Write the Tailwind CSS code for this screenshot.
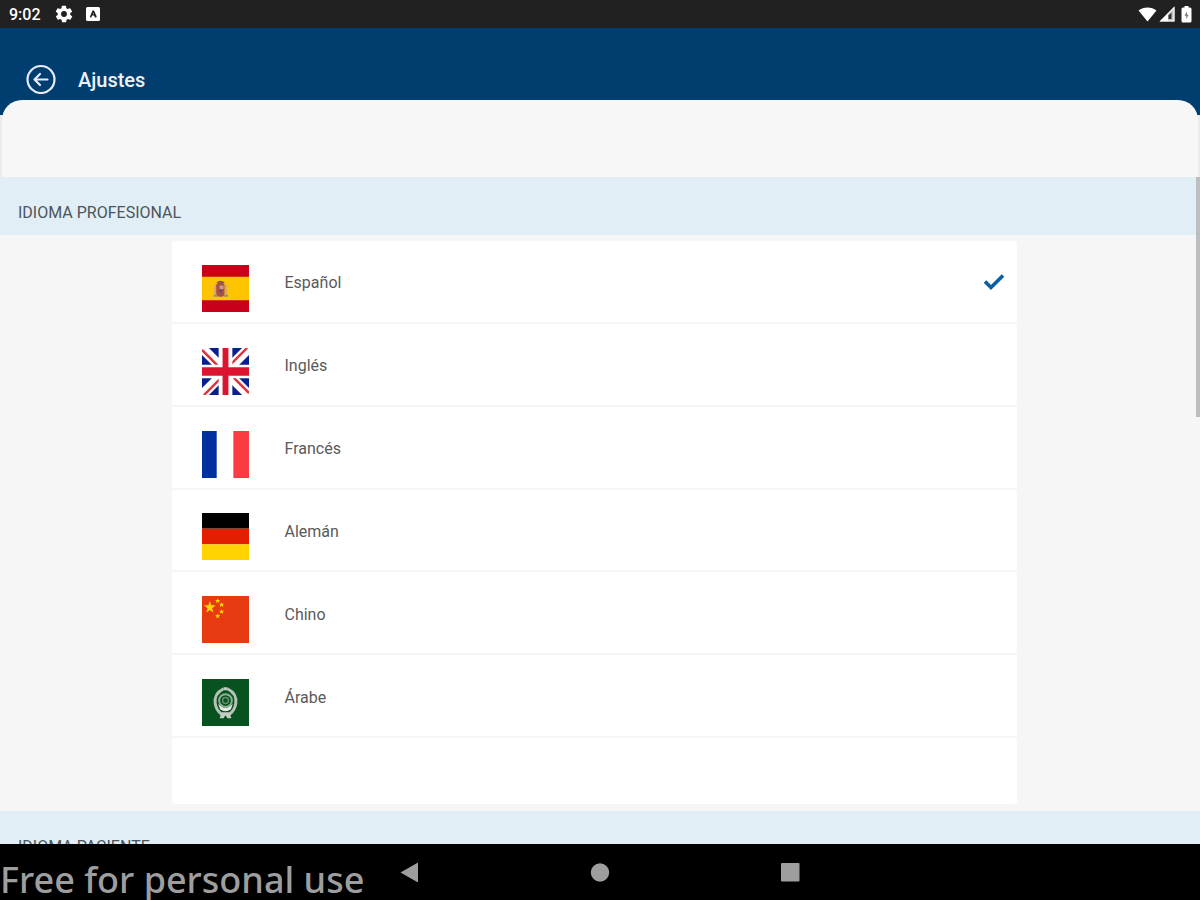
<!DOCTYPE html>
<html lang="es">
<head>
    <meta charset="UTF-8">
    <meta name="viewport" content="width=device-width, initial-scale=1.0">
    <title>Ajustes</title>
    <script src="https://cdn.jsdelivr.net/npm/@tailwindcss/browser@4"></script>
</head>
<body class="h-screen flex flex-col overflow-hidden bg-[#f6f6f6] font-[Roboto,sans-serif] text-base text-[#5a5a5a]">

    <!-- Status bar -->
    <div class="h-7 shrink-0 flex items-center justify-between bg-[#212121] text-white pl-[9px] pr-2">
        <div class="flex items-center gap-[13px]">
            <span class="text-base font-medium leading-7 pt-[2px]">9:02</span>
            <svg class="w-5 h-5" viewBox="0 0 24 24" fill="currentColor"><path d="M19.4 13c0-.3.1-.6.1-1s0-.7-.1-1l2.1-1.600c.2-.2.3-.4.1-.7l-2-3.400c-.1-.2-.4-.3-.6-.2l-2.500 1c-.5-.4-1.100-.7-1.700-1l-.4-2.600c0-.3-.2-.5-.5-.5h-4c-.2 0-.4.2-.5.4l-.4 2.700c-.6.2-1.100.6-1.700 1l-2.500-1c-.2-.1-.5 0-.6.2l-2 3.400c-.1.3 0 .5.1.7L4.600 11c0 .3-.1.700-.1 1s0 .7.1 1l-2.100 1.600c-.2.2-.3.400-.1.700l2 3.400c.1.200.4.300.6.200l2.500-1c.5.4 1.100.7 1.700 1l.4 2.600c0 .3.200.5.5.5h4c.2 0 .5-.2.5-.4l.4-2.700c.6-.2 1.200-.6 1.700-1l2.500 1c.2.1.5 0 .6-.2l2-3.400c.1-.2.1-.5-.1-.7L19.400 13zM12 15.500a3.500 3.500 0 1 1 0-7 3.500 3.500 0 0 1 0 7z"/></svg>
            <svg class="w-[14px] h-[14px] -ml-[1px]" viewBox="0 0 14 14"><rect width="14" height="14" rx="1.500" fill="#fff"/><path d="M4 10.500V9.500L6.500 3.500h1.500L10.500 9v1.500H9L8 8.500H6.200L5.200 10.500z" fill="#212121"/><path d="M6.800 7.300h1L7.400 5.800z" fill="#fff"/></svg>
        </div>
        <div class="flex items-center gap-[2px]">
            <svg class="w-[19px] h-[15px]" viewBox="0 0 19 15" fill="currentColor"><path d="M.5 3.500C5.500-.5 13.500-.5 18.500 3.500L9.500 14.500z"/></svg>
            <svg class="w-4 h-4" viewBox="0 0 16 16"><path d="M.5 15.500L15.500.5v15z" fill="#fff" fill-opacity=".75"/><path d="M.5 15.500L15.500.5v15z M9 14.500h5.500V3L9 8.500z" fill="#fff" fill-rule="evenodd"/><path d="M9.500 13V9.500l3-3V13z" fill="#333"/></svg>
            <svg class="w-[11px] h-[17px] ml-1" viewBox="0 0 11 17"><path d="M3.500 0h4v1.500H9a1.500 1.500 0 0 1 1.500 1.500v12A1.500 1.500 0 0 1 9 16.500H2A1.500 1.500 0 0 1 .5 15V3A1.500 1.500 0 0 1 2 1.500h1.500z" fill="#fff"/><path d="M6 5.500L3.500 9.800H5.200V13L7.700 8.700H6z" fill="#777"/></svg>
        </div>
    </div>

    <!-- App bar -->
    <header class="h-[87px] shrink-0 flex items-start bg-[#003e70] text-white pt-9 pl-[26px]">
        <button type="button" aria-label="Volver" class="w-[30px] h-[30px]">
            <svg class="w-[30px] h-[30px]" viewBox="0 0 30 30" fill="none" stroke="#e9ecff" stroke-width="2.200" stroke-linecap="round" stroke-linejoin="round"><circle cx="15" cy="15.500" r="13.500"/><path d="M21.500 15.500H8.500M14 10L8.500 15.500l5.500 5.500"/></svg>
        </button>
        <h1 class="ml-[22px] text-xl leading-8 font-medium text-[#eef1f8]">Ajustes</h1>
    </header>

    <div class="shrink-0 -mt-[15px] bg-linear-to-b from-transparent from-[15px] to-[#ebebeb] to-[15px] px-[2px]">
        <div class="h-[77px] rounded-t-[20px] bg-[#f7f7f7]"></div>
    </div>

    <main class="relative flex-1 min-h-0 overflow-hidden">
        <h2 class="h-[58px] pl-[18px] pt-3 leading-[47px] bg-[#e1eef6] text-[#4b555b]">IDIOMA PROFESIONAL</h2>

        <div class="w-[845px] max-w-full mx-auto mt-[6px] mb-[7px] pb-[66px] -translate-x-[6px] rounded-[3px] bg-white">
            <div class="h-[497px] grid grid-rows-6" role="radiogroup" aria-label="Idioma profesional">
                <label class="relative flex items-center border-b-2 border-[#f6f6f6] pl-[30px] pr-3">
                    <input type="radio" name="idioma" value="es" class="peer sr-only" checked>
                    <svg class="w-[47px] h-[47px] mt-[14px]" viewBox="0 0 48 48">
                        <rect width="48" height="48" fill="#c8001b"/><rect y="12" width="48" height="24" fill="#ffc400"/>
                        <path d="M12.500 20h2v11h-2zM23.500 20h2v11h-2z" fill="#d3a770"/>
                        <path d="M14.500 20l4.500-3 4 3v9q0 3.500-4 3.500t-4.500-3.500z" fill="#a8504a"/><path d="M15.500 18.500q3.500-3 7 0" stroke="#8a5a3f" stroke-width="2" fill="none"/>
                        <path d="M18 21h4v3.500h-4z" fill="#cf9a90"/><circle cx="19" cy="26.500" r="1.600" fill="#5a5078"/><path d="M12 31.500h4M22.500 31.500h4" stroke="#a08a78" stroke-width="2"/>
                    </svg>
                    <span class="ml-9 pt-1 flex-1">Español</span>
                    <svg class="w-[22px] h-[18px] mt-[2px] invisible peer-checked:visible" viewBox="0 0 22 18" fill="none" stroke="#0c5fa5" stroke-width="3.600"><path d="M2 8.500L8 14.500L20 2.500"/></svg>
                </label>
                <label class="relative flex items-center border-b-2 border-[#f6f6f6] pl-[30px] pr-3">
                    <input type="radio" name="idioma" value="en" class="peer sr-only">
                    <svg class="w-[47px] h-[47px] mt-[14px]" viewBox="0 0 48 48">
                        <rect width="48" height="48" fill="#0a1f8f"/>
                        <path d="M0 0l48 48M48 0L0 48" stroke="#fff" stroke-width="10"/>
                        <path d="M0 2L20 22M46 0L26 20M48 46L28 26M2 48L22 28" stroke="#e0323c" stroke-width="2.500"/>
                        <path d="M24 0v48M0 24h48" stroke="#fff" stroke-width="14"/>
                        <path d="M24 0v48" stroke="#dc1430" stroke-width="6"/><path d="M0 24h48" stroke="#dc1430" stroke-width="8.500"/>
                    </svg>
                    <span class="ml-9 pt-1 flex-1">Inglés</span>
                    <svg class="w-[22px] h-[18px] mt-[2px] invisible peer-checked:visible" viewBox="0 0 22 18" fill="none" stroke="#0c5fa5" stroke-width="3.600"><path d="M2 8.500L8 14.500L20 2.500"/></svg>
                </label>
                <label class="relative flex items-center border-b-2 border-[#f6f6f6] pl-[30px] pr-3">
                    <input type="radio" name="idioma" value="fr" class="peer sr-only">
                    <svg class="w-[47px] h-[47px] mt-[14px]" viewBox="0 0 48 48">
                        <rect width="48" height="48" fill="#fff"/><rect width="15" height="48" fill="#0030a0"/><rect x="32" width="16" height="48" fill="#f93c44"/>
                    </svg>
                    <span class="ml-9 pt-1 flex-1">Francés</span>
                    <svg class="w-[22px] h-[18px] mt-[2px] invisible peer-checked:visible" viewBox="0 0 22 18" fill="none" stroke="#0c5fa5" stroke-width="3.600"><path d="M2 8.500L8 14.500L20 2.500"/></svg>
                </label>
                <label class="relative flex items-center border-b-2 border-[#f6f6f6] pl-[30px] pr-3">
                    <input type="radio" name="idioma" value="de" class="peer sr-only">
                    <svg class="w-[47px] h-[47px] mt-[14px]" viewBox="0 0 48 48">
                        <rect width="48" height="16" fill="#000"/><rect y="16" width="48" height="16" fill="#e41f00"/><rect y="32" width="48" height="16" fill="#ffd200"/>
                    </svg>
                    <span class="ml-9 pt-1 flex-1">Alemán</span>
                    <svg class="w-[22px] h-[18px] mt-[2px] invisible peer-checked:visible" viewBox="0 0 22 18" fill="none" stroke="#0c5fa5" stroke-width="3.600"><path d="M2 8.500L8 14.500L20 2.500"/></svg>
                </label>
                <label class="relative flex items-center border-b-2 border-[#f6f6f6] pl-[30px] pr-3">
                    <input type="radio" name="idioma" value="zh" class="peer sr-only">
                    <svg class="w-[47px] h-[47px] mt-[14px]" viewBox="0 0 48 48">
                        <rect width="48" height="48" fill="#e73a10"/>
                        <g fill="#ffd800">
                            <path d="M8 5l1.500 4.500H14l-3.700 2.900L11.800 17 8 14.200 4.200 17l1.500-4.600L2 9.500h4.500z"/>
                            <path id="star" d="M16 2.500l.7 1.500h1.800l-1.300 1.300.5 1.900-1.700-1-1.700 1 .5-1.900L13.500 4h1.800z"/>
                            <use href="#star" x="4" y="4"/><use href="#star" x="4" y="11"/><use href="#star" y="15.500"/>
                        </g>
                    </svg>
                    <span class="ml-9 pt-1 flex-1">Chino</span>
                    <svg class="w-[22px] h-[18px] mt-[2px] invisible peer-checked:visible" viewBox="0 0 22 18" fill="none" stroke="#0c5fa5" stroke-width="3.600"><path d="M2 8.500L8 14.500L20 2.500"/></svg>
                </label>
                <label class="relative flex items-center border-b-2 border-[#f6f6f6] pl-[30px] pr-3">
                    <input type="radio" name="idioma" value="ar" class="peer sr-only">
                    <svg class="w-[47px] h-[47px] mt-[14px]" viewBox="0 0 48 48" fill="none">
                        <rect width="48" height="48" fill="#07521f"/>
                        <path d="M22 10q-10 5-8.500 15 1 7 6.500 11M26 10q10 5 8.500 15-1 7-6.500 11" stroke="#b4c4b4" stroke-width="3"/>
                        <circle cx="24" cy="22" r="6.500" stroke="#8fae95" stroke-width="2"/><circle cx="24" cy="22" r="3" stroke="#5f8f6c" stroke-width="1.500"/>
                        <path d="M16.500 25q7.500 9 15 0l-2 6q-5.500 4-11 0z" fill="#e6ece4"/><path d="M22 8.500h4v3h-4zM20 34l-2 6h4l2-3 2 3h4l-2-6z" fill="#c3cfc2"/>
                    </svg>
                    <span class="ml-9 pt-1 flex-1">Árabe</span>
                    <svg class="w-[22px] h-[18px] mt-[2px] invisible peer-checked:visible" viewBox="0 0 22 18" fill="none" stroke="#0c5fa5" stroke-width="3.600"><path d="M2 8.500L8 14.500L20 2.500"/></svg>
                </label>
            </div>
        </div>

        <h2 class="h-[58px] pl-[18px] pt-3 leading-[47px] bg-[#e1eef6] text-[#4b555b]">IDIOMA PACIENTE</h2>

        <!-- Scroll thumb -->
        <div class="absolute top-0 right-0 w-1 h-60 bg-[#bcbfc1]"></div>
    </main>

    <!-- Android navigation -->
    <nav class="relative h-14 shrink-0 flex justify-center gap-[170px] pt-[18px] bg-black text-[#9e9e9e]">
        <p class="absolute left-0 top-[10px] text-4xl leading-[52px] font-medium font-['Noto_Sans',sans-serif] whitespace-nowrap">Free for personal use</p>
        <button type="button" aria-label="Atrás" class="w-5 h-5"><svg class="w-5 h-5" viewBox="0 0 20 20" fill="currentColor"><path d="M.5 10.500L18 .5v20z"/></svg></button>
        <button type="button" aria-label="Inicio" class="w-5 h-5"><svg class="w-5 h-5" viewBox="0 0 20 20" fill="currentColor"><circle cx="10" cy="10.500" r="9.200"/></svg></button>
        <button type="button" aria-label="Recientes" class="w-5 h-5"><svg class="w-5 h-5" viewBox="0 0 20 20" fill="currentColor"><rect x="1" y="1" width="18.500" height="18.500" rx="1"/></svg></button>
    </nav>
</body>
</html>
